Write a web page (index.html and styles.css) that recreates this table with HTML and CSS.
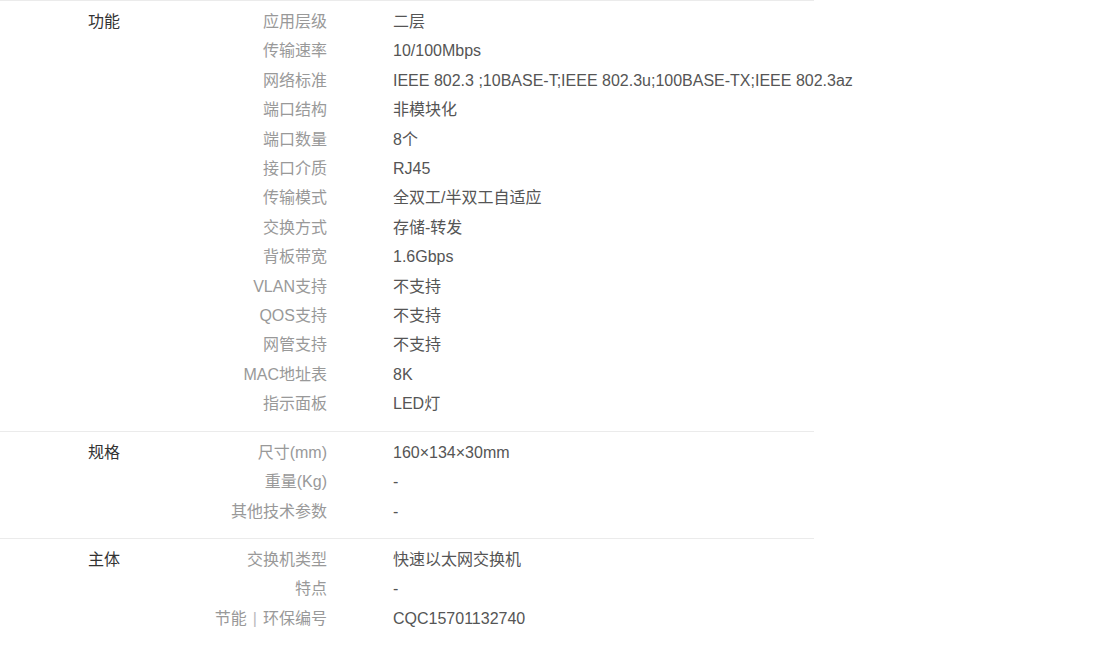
FILE: index.html
```html
<!DOCTYPE html>
<html lang="zh-CN">
<head>
  <meta charset="UTF-8" />
  <meta name="viewport" content="width=device-width, initial-scale=1.0" />
  <title>规格参数</title>
  <link rel="stylesheet" href="styles.css">
</head>
<body>
  <div class="specs">
    <div class="group">
      <div class="group-name">功能</div>
      <div class="items">
        <div class="row"><span class="label">应用层级</span><span class="value">二层</span></div>
        <div class="row"><span class="label">传输速率</span><span class="value">10/100Mbps</span></div>
        <div class="row"><span class="label">网络标准</span><span class="value">IEEE 802.3 ;10BASE-T;IEEE 802.3u;100BASE-TX;IEEE 802.3az</span></div>
        <div class="row"><span class="label">端口结构</span><span class="value">非模块化</span></div>
        <div class="row"><span class="label">端口数量</span><span class="value">8个</span></div>
        <div class="row"><span class="label">接口介质</span><span class="value">RJ45</span></div>
        <div class="row"><span class="label">传输模式</span><span class="value">全双工/半双工自适应</span></div>
        <div class="row"><span class="label">交换方式</span><span class="value">存储-转发</span></div>
        <div class="row"><span class="label">背板带宽</span><span class="value">1.6Gbps</span></div>
        <div class="row"><span class="label">VLAN支持</span><span class="value">不支持</span></div>
        <div class="row"><span class="label">QOS支持</span><span class="value">不支持</span></div>
        <div class="row"><span class="label">网管支持</span><span class="value">不支持</span></div>
        <div class="row"><span class="label">MAC地址表</span><span class="value">8K</span></div>
        <div class="row"><span class="label">指示面板</span><span class="value">LED灯</span></div>
      </div>
    </div>

    <div class="group">
      <div class="group-name">规格</div>
      <div class="items">
        <div class="row"><span class="label">尺寸(mm)</span><span class="value">160×134×30mm</span></div>
        <div class="row"><span class="label">重量(Kg)</span><span class="value">-</span></div>
        <div class="row"><span class="label">其他技术参数</span><span class="value">-</span></div>
      </div>
    </div>

    <div class="group">
      <div class="group-name">主体</div>
      <div class="items">
        <div class="row"><span class="label">交换机类型</span><span class="value">快速以太网交换机</span></div>
        <div class="row"><span class="label">特点</span><span class="value">-</span></div>
        <div class="row"><span class="label">节能<span class="sep">|</span>环保编号</span><span class="value">CQC15701132740</span></div>
      </div>
    </div>
  </div>
</body>
</html>
```

FILE: styles.css
```css
body {
  margin: 0;
  padding: 0;
  background: #fff;
  font-family: "Liberation Sans", "Noto Sans CJK SC", sans-serif;
  font-size: 16px;
  color: #333;
}

.specs {
  width: 814px;
}

.group {
  display: flex;
  border-top: 1px solid #ebebeb;
  padding: 6px 0 12px;
}

.group-name {
  width: 160px;
  flex-shrink: 0;
  padding-left: 88px;
  box-sizing: border-box;
  line-height: 29.4px;
  color: #333;
}

.items {
  flex: 1;
  min-width: 0;
}

.row {
  display: flex;
  line-height: 29.4px;
  white-space: nowrap;
}

.label {
  width: 167px;
  flex-shrink: 0;
  text-align: right;
  color: #999;
}

.sep {
  margin: 0 6px;
  color: #bbb;
}

.value {
  margin-left: 66px;
  color: #555;
}
```
